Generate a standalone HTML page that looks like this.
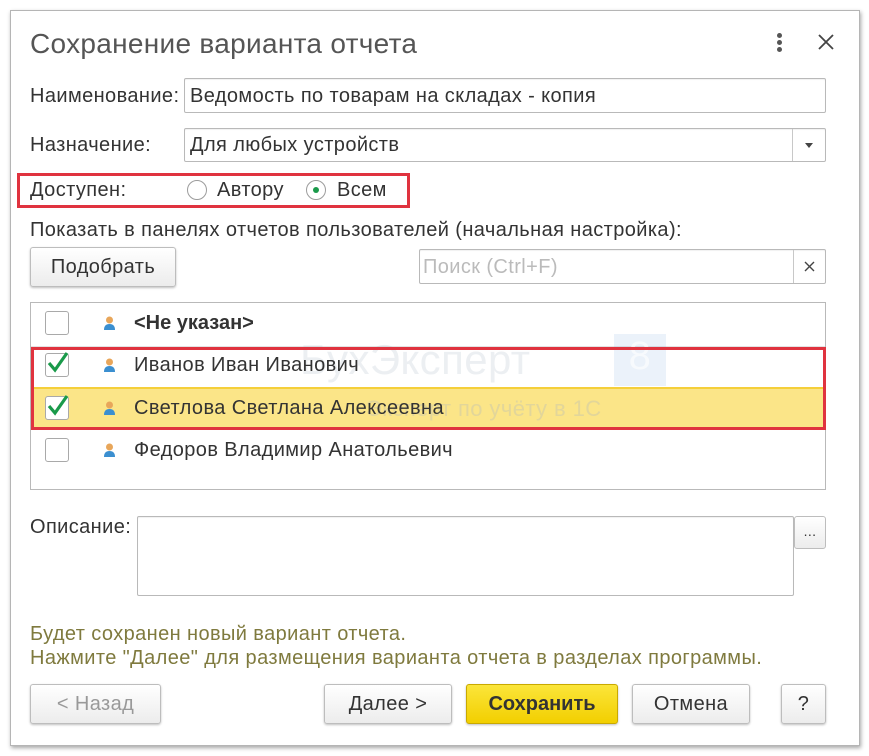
<!DOCTYPE html>
<html><head><meta charset="utf-8"><style>
*{margin:0;padding:0;box-sizing:border-box}
body{width:869px;height:756px;background:#fff;position:relative;overflow:hidden;font-family:"Liberation Sans",Arial,sans-serif;color:#333;font-size:20px;letter-spacing:.4px}
.a{position:absolute;white-space:nowrap}
.dlg{left:10px;top:10px;width:850px;height:736px;border:1px solid #b5b5b5;box-shadow:1px 2px 4px rgba(0,0,0,.35);background:#fff}
.inp{border:1px solid #b9b9b9;border-radius:2px;background:#fff;box-shadow:inset 0 1px 1px rgba(0,0,0,.06)}
.btn{border:1px solid #bdbdbd;border-radius:3px;background:linear-gradient(#fff,#ececec);box-shadow:0 1px 2px rgba(0,0,0,.25);text-align:center}
.t{line-height:22px}
.cb{width:24px;height:24px;border:1px solid #a9a9a9;border-radius:3px;background:#fff}
.rad{width:20px;height:20px;border:1px solid #9c9c9c;border-radius:50%;background:#fff}
</style></head><body>
<div class="a dlg"></div>
<div class="a" style="left:30px;top:27px;font-size:28px;letter-spacing:.3px;color:#555;line-height:34px">Сохранение варианта отчета</div>
<div class="a" style="left:777px;top:33px;width:5px;height:5px;border-radius:50%;background:#555;box-shadow:0 7px 0 #555,0 14px 0 #555"></div>
<svg class="a" style="left:817px;top:33px" width="18" height="18"><path d="M2 2L16 16M16 2L2 16" stroke="#444" stroke-width="1.8"/></svg>

<div class="a t" style="left:30px;top:85px">Наименование:</div>
<div class="a inp" style="left:184px;top:78px;width:642px;height:35px"></div>
<div class="a t" style="left:190px;top:85px">Ведомость по товарам на складах - копия</div>

<div class="a t" style="left:30px;top:134px">Назначение:</div>
<div class="a inp" style="left:184px;top:128px;width:642px;height:34px"></div>
<div class="a" style="left:792px;top:129px;width:1px;height:32px;background:#c8c8c8"></div>
<div class="a" style="left:805px;top:143px;border-left:4px solid transparent;border-right:4px solid transparent;border-top:5px solid #444"></div>
<div class="a t" style="left:190px;top:134px">Для любых устройств</div>

<div class="a" style="left:17px;top:173px;width:393px;height:35px;border:3px solid #e0333f"></div>
<div class="a t" style="left:30px;top:179px">Доступен:</div>
<div class="a rad" style="left:187px;top:180px"></div>
<div class="a t" style="left:217px;top:179px">Автору</div>
<div class="a rad" style="left:306px;top:180px"></div>
<div class="a" style="left:313px;top:187px;width:6px;height:6px;border-radius:50%;background:#1a9a4a"></div>
<div class="a t" style="left:337px;top:179px">Всем</div>

<div class="a t" style="left:30px;top:219px">Показать в панелях отчетов пользователей (начальная настройка):</div>
<div class="a btn" style="left:30px;top:247px;width:146px;height:40px;line-height:38px">Подобрать</div>
<div class="a inp" style="left:419px;top:249px;width:407px;height:35px"></div>
<div class="a" style="left:793px;top:250px;width:1px;height:33px;background:#c8c8c8"></div>
<div class="a t" style="left:423px;top:256px;color:#bbb">Поиск (Ctrl+F)</div>
<svg class="a" style="left:804px;top:261px" width="11" height="11"><path d="M1 1L10 10M10 1L1 10" stroke="#444" stroke-width="1.4"/></svg>

<div class="a" style="left:30px;top:302px;width:796px;height:188px;border:1px solid #b9b9b9;background:#fff"></div>
<div class="a" style="left:31px;top:387px;width:794px;height:41px;background:#fbe588;border-top:2px solid #f5cf3a"></div>
<div class="a" style="left:31px;top:346px;width:794px;height:1px;background:#e3e3e3"></div>
<div class="a" style="left:31px;top:429px;width:794px;height:1px;background:#e3e3e3"></div>
<div class="a" style="left:300px;top:336px;font-size:42px;color:rgba(170,180,195,.22)">БухЭксперт</div>
<div class="a" style="left:366px;top:396px;font-size:22px;color:rgba(170,180,195,.3)">Эксперт по учёту в 1С</div>
<div class="a" style="left:614px;top:334px;width:52px;height:52px;background:rgba(120,170,220,.15);color:rgba(255,255,255,.6);font-size:40px;text-align:center">8</div>
<div class="a" style="left:31px;top:347px;width:795px;height:83px;border:3px solid #e0333f"></div>

<div class="a cb" style="left:45px;top:311px"></div>
<div class="a cb" style="left:45px;top:353px"></div>
<div class="a cb" style="left:45px;top:396px"></div>
<div class="a cb" style="left:45px;top:438px"></div>
<svg class="a" style="left:46px;top:350px" width="24" height="24"><path d="M3 13L9 20L21 3" stroke="#1a9a4a" stroke-width="3.2" fill="none"/></svg>
<svg class="a" style="left:46px;top:393px" width="24" height="24"><path d="M3 13L9 20L21 3" stroke="#1a9a4a" stroke-width="3.2" fill="none"/></svg>

<svg class="a" style="left:103px;top:315px" width="13" height="16"><circle cx="6.5" cy="5" r="3.5" fill="#e8a65a"/><path d="M1 15Q1 9 6.5 9Q12 9 12 15Z" fill="#3b8fd0"/></svg>
<svg class="a" style="left:103px;top:357px" width="13" height="16"><circle cx="6.5" cy="5" r="3.5" fill="#e8a65a"/><path d="M1 15Q1 9 6.5 9Q12 9 12 15Z" fill="#3b8fd0"/></svg>
<svg class="a" style="left:103px;top:400px" width="13" height="16"><circle cx="6.5" cy="5" r="3.5" fill="#e8a65a"/><path d="M1 15Q1 9 6.5 9Q12 9 12 15Z" fill="#3b8fd0"/></svg>
<svg class="a" style="left:103px;top:442px" width="13" height="16"><circle cx="6.5" cy="5" r="3.5" fill="#e8a65a"/><path d="M1 15Q1 9 6.5 9Q12 9 12 15Z" fill="#3b8fd0"/></svg>

<div class="a t" style="left:134px;top:312px;font-weight:bold;letter-spacing:0">&lt;Не указан&gt;</div>
<div class="a t" style="left:134px;top:354px">Иванов Иван Иванович</div>
<div class="a t" style="left:134px;top:397px">Светлова Светлана Алексеевна</div>
<div class="a t" style="left:134px;top:439px">Федоров Владимир Анатольевич</div>

<div class="a t" style="left:30px;top:516px">Описание:</div>
<div class="a inp" style="left:137px;top:516px;width:657px;height:80px"></div>
<div class="a btn" style="left:794px;top:516px;width:32px;height:33px;line-height:28px;font-size:14px;box-shadow:none">...</div>

<div class="a t" style="left:30px;top:623px;color:#7f7a3e">Будет сохранен новый вариант отчета.</div>
<div class="a t" style="left:30px;top:647px;color:#7f7a3e">Нажмите "Далее" для размещения варианта отчета в разделах программы.</div>

<div class="a btn" style="left:30px;top:684px;width:131px;height:40px;line-height:38px;color:#999">&lt; Назад</div>
<div class="a btn" style="left:324px;top:684px;width:128px;height:40px;line-height:38px">Далее &gt;</div>
<div class="a btn" style="left:466px;top:684px;width:152px;height:40px;line-height:38px;background:linear-gradient(#fbe53a,#f2cf00);border-color:#c9a900;font-weight:bold;letter-spacing:0">Сохранить</div>
<div class="a btn" style="left:632px;top:684px;width:118px;height:40px;line-height:38px">Отмена</div>
<div class="a btn" style="left:781px;top:684px;width:45px;height:40px;line-height:38px">?</div>
</body></html>
